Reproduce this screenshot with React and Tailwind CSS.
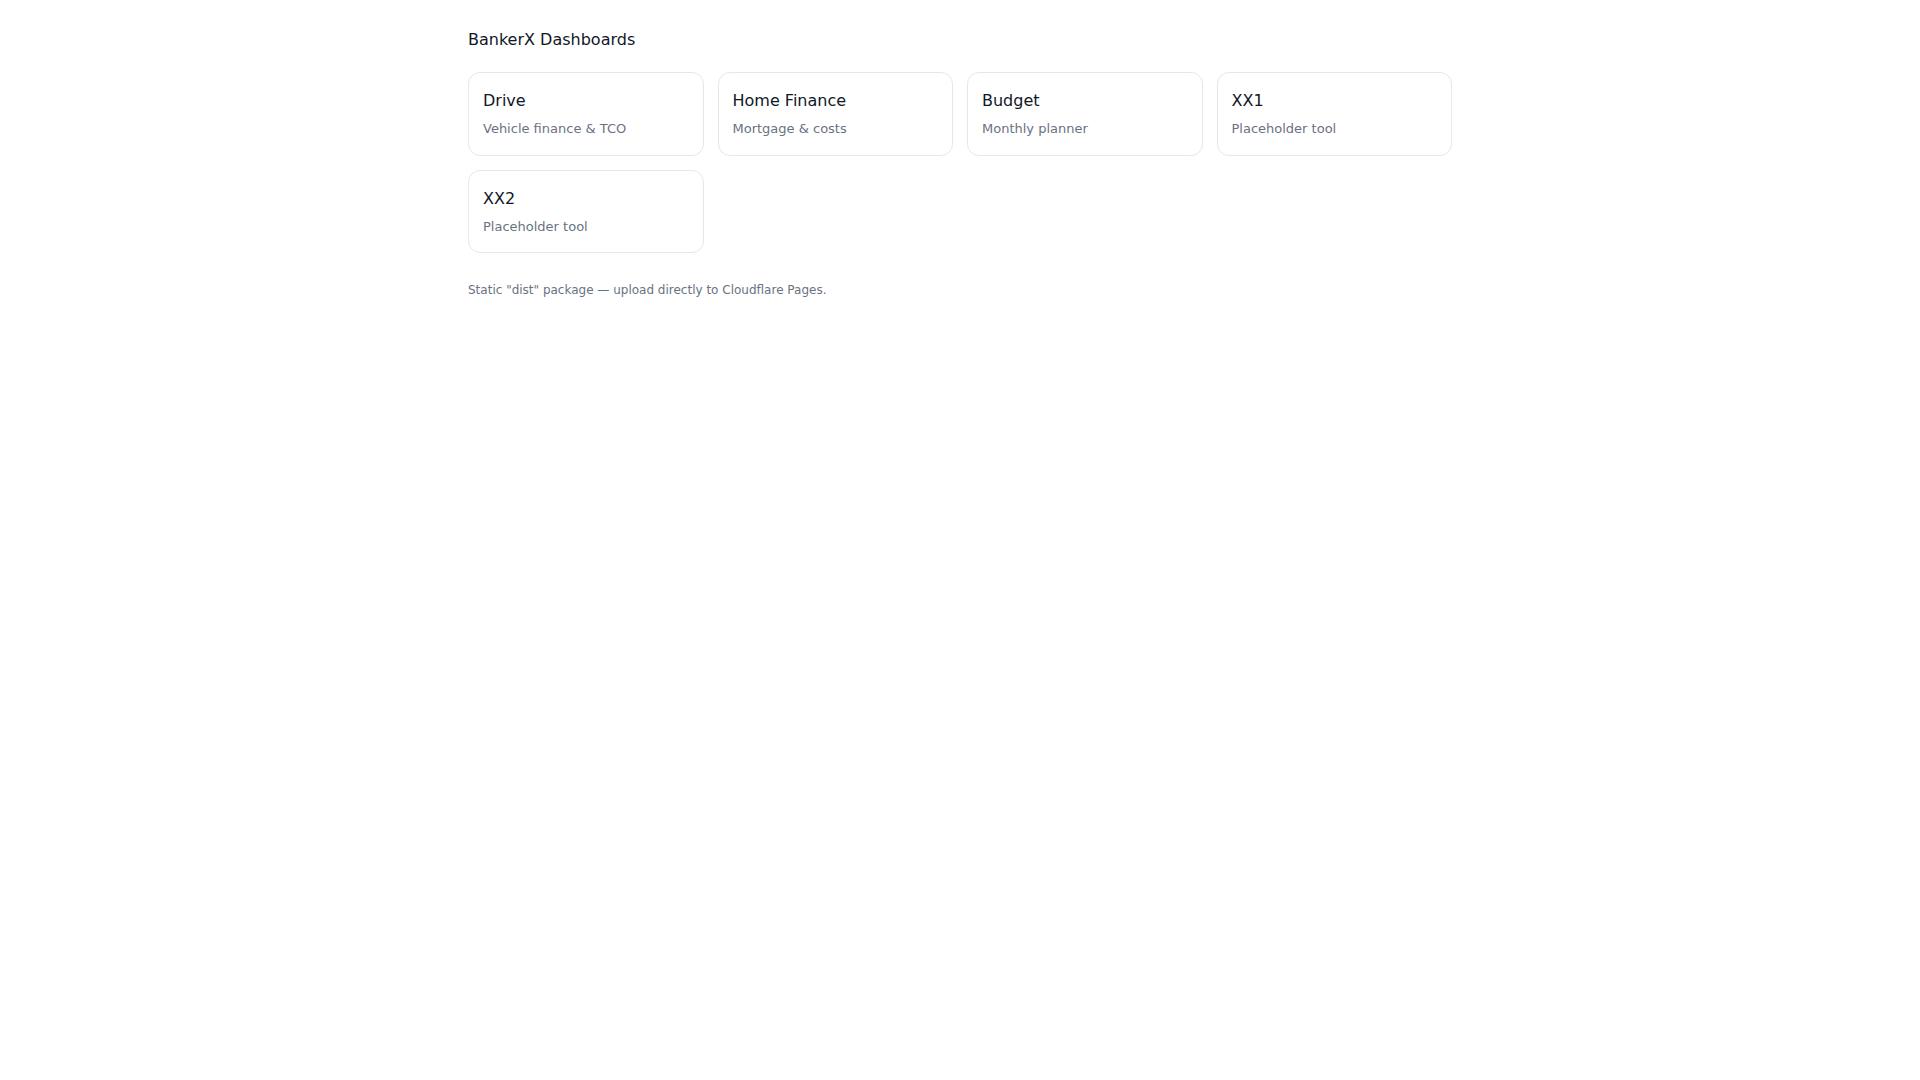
const TOOLS = [
  { name: 'Drive', desc: 'Vehicle finance & TCO' },
  { name: 'Home Finance', desc: 'Mortgage & costs' },
  { name: 'Budget', desc: 'Monthly planner' },
  { name: 'XX1', desc: 'Placeholder tool' },
  { name: 'XX2', desc: 'Placeholder tool' },
]

export default function App() {
  return (
    <div className="min-h-screen bg-white font-['DejaVu_Sans',sans-serif] text-gray-900">
      <div className="max-w-[1024px] mx-auto px-5 pt-7">
        <h1 className="text-base leading-6 font-normal mb-5">BankerX Dashboards</h1>

        <div className="grid grid-cols-4 gap-3.5">
          {TOOLS.map(t => (
            <a key={t.name} href="#"
              className="block bg-white border border-gray-200 rounded-xl px-3.5 py-4 hover:border-gray-300">
              <div className="text-base leading-6 text-gray-900">{t.name}</div>
              <div className="text-[13px] leading-[19.5px] text-gray-500 mt-1.5">{t.desc}</div>
            </a>
          ))}
        </div>

        <p className="text-xs leading-[18px] text-gray-500 mt-7">
          Static "dist" package — upload directly to Cloudflare Pages.
        </p>
      </div>
    </div>
  )
}
